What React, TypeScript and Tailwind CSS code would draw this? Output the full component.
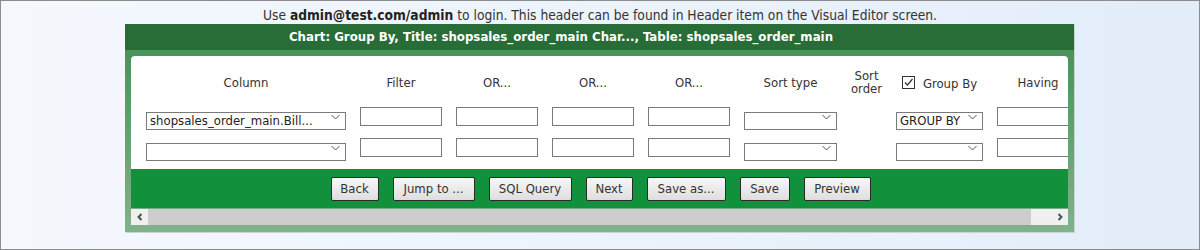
import { ReactNode } from 'react'

const font = { fontFamily: 'Tahoma, "DejaVu Sans Condensed", "DejaVu Sans", sans-serif' }

function Chevron() {
  return (
    <svg width="9" height="5" viewBox="0 0 9 5" className="pointer-events-none absolute right-[6px] top-1/2 -translate-y-1/2">
      <path d="M0.5 0.5 L4.5 4.5 L8.5 0.5" fill="none" stroke="#555" strokeWidth="1" />
    </svg>
  )
}

function Select({ width, value }: { width: string; value?: string }) {
  return (
    <div className={`relative h-[18px] ${width}`}>
      <select
        defaultValue={value}
        className="h-full w-full appearance-none border border-[#7a7a7a] bg-white pl-[3px] pr-[18px] text-[13px] leading-[16px] text-[#222] outline-none"
        style={font}
      >
        <option value="">{''}</option>
        {value && <option value={value}>{value}</option>}
      </select>
      <Chevron />
    </div>
  )
}

function Input() {
  return <input className="h-[19px] w-[82px] border border-[#7a7a7a] bg-white outline-none" />
}

function Head({ children }: { children: ReactNode }) {
  return <div className="text-center text-[13px] leading-[13px] text-[#333]">{children}</div>
}

function Button({ label, width }: { label: string; width: string }) {
  return (
    <button
      className={`h-[24px] ${width} rounded-[2px] border border-[#2b2b2b] bg-gradient-to-b from-[#f7f7f7] to-[#dedede] text-[13px] text-[#333]`}
      style={font}
    >
      {label}
    </button>
  )
}

export default function App() {
  return (
    <div
      className="h-[250px] w-[1200px] overflow-hidden border border-[#8c8c8c] bg-gradient-to-r from-[#f5f9fe] to-[#e3edfa]"
      style={font}
    >
      <div className="pt-[6px] text-center text-[13.7px] leading-[17px] text-[#333]">
        Use <b className="text-[#222]">admin@test.com/admin</b> to login. This header can be found in Header item on the Visual Editor screen.
      </div>

      <div className="ml-[124px] w-[949px] bg-gradient-to-b from-[#3f8f53] to-[#80b28b] shadow-[1px_1px_0_#c9d3cf]">
        <div className="flex h-[26px] items-center justify-center bg-[#286c38] pr-[77px] text-[13.1px] font-bold text-white">
          Chart: Group By, Title: shopsales_order_main Char..., Table: shopsales_order_main
        </div>

        <div className="px-[6px] pb-[7px] pt-[6px]">
          <div className="overflow-hidden rounded-t-[4px] bg-white">
            <div className="grid grid-cols-[200px_82px_82px_82px_82px_93px_31px_87px_82px] items-center gap-x-[14px] gap-y-[12px] pb-[12px] pl-[15px] pt-[13px]">
              <Head>Column</Head>
              <Head>Filter</Head>
              <Head>OR...</Head>
              <Head>OR...</Head>
              <Head>OR...</Head>
              <Head>Sort type</Head>
              <div className="-mx-[4px] text-center text-[13px] leading-[13px] text-[#333]">
                Sort
                <br />
                order
              </div>
              <label className="flex items-center justify-center gap-[8px] text-[13px] leading-[13px] text-[#333]">
                <span className="flex h-[13px] w-[13px] items-center justify-center border border-[#333] bg-white">
                  <svg width="11" height="11" viewBox="0 0 11 11">
                    <path d="M2 5.5 L4.5 8 L9.5 2" fill="none" stroke="#333" strokeWidth="1.2" />
                  </svg>
                </span>
                <span className="pt-[3px]">Group By</span>
              </label>
              <Head>Having</Head>

              <div className="col-span-9 grid grid-cols-subgrid items-center">
                <Select width="w-[200px]" value="shopsales_order_main.Bill..." />
                <Input />
                <Input />
                <Input />
                <Input />
                <Select width="w-[93px]" />
                <div />
                <Select width="w-[87px]" value="GROUP BY" />
                <Input />
              </div>

              <div className="col-span-9 grid grid-cols-subgrid items-center">
                <Select width="w-[200px]" />
                <Input />
                <Input />
                <Input />
                <Input />
                <Select width="w-[93px]" />
                <div />
                <Select width="w-[87px]" />
                <Input />
              </div>
            </div>
          </div>

          <div className="flex h-[39px] items-center justify-center gap-[14px] bg-[#12913d] pl-[2px]">
            <Button label="Back" width="w-[48px]" />
            <Button label="Jump to ..." width="w-[82px]" />
            <Button label="SQL Query" width="w-[83px]" />
            <Button label="Next" width="w-[47px]" />
            <Button label="Save as..." width="w-[79px]" />
            <Button label="Save" width="w-[50px]" />
            <Button label="Preview" width="w-[67px]" />
          </div>

          <div className="mt-[1px] flex h-[16px] bg-[#f0f0f0]">
            <div className="flex w-[17px] items-center justify-center">
              <svg width="8" height="8" viewBox="0 0 8 8">
                <path d="M5.5 1 L2.5 4 L5.5 7" fill="none" stroke="#505050" strokeWidth="2" />
              </svg>
            </div>
            <div className="w-[883px] bg-[#cdcdcd]" />
            <div className="flex flex-1 items-center justify-end pr-[4px]">
              <svg width="8" height="8" viewBox="0 0 8 8">
                <path d="M2.5 1 L5.5 4 L2.5 7" fill="none" stroke="#505050" strokeWidth="2" />
              </svg>
            </div>
          </div>
        </div>
      </div>
    </div>
  )
}
